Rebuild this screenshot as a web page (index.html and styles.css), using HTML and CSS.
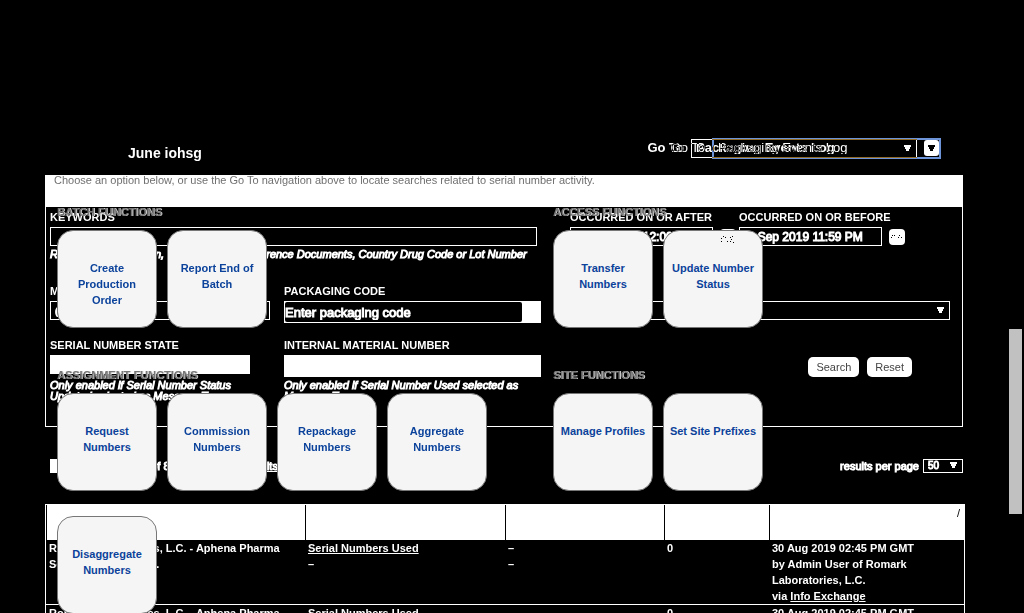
FILE: index.html
```html
<!DOCTYPE html>
<html lang="en">
<head>
<meta charset="utf-8">
<title>Serial number activity</title>
<link rel="stylesheet" href="styles.css">
</head>
<body>
<div class="page">
  <header class="header">
    <strong class="account">June iohsg</strong>
    <div class="goto">
      <label for="goto">Go To</label>
      <span class="select goto-select">
        <select id="goto"><option>Packaging Events Log</option></select>
        <svg class="arrow" viewBox="0 0 7 7"><path d="M0 0h7v2H6v2H5v2H2V4H1V2H0z"/></svg>
      </span>
      <button class="goto-button" type="button" aria-label="Open menu"><svg class="arrow" viewBox="0 0 7 7"><path d="M0 0h7v2H6v2H5v2H2V4H1V2H0z"/></svg></button>
    </div>
  </header>
  <main class="main">
    <form class="panel">
      <div class="band"></div>
      <div class="fields">
        <div class="field wide">
          <label for="kw">KEYWORDS</label>
          <input id="kw" class="keywords" type="text">
          <p class="hint">Results by Transaction, Event Number, Reference Documents, Country Drug Code or Lot Number</p>
        </div>
        <div class="dates">
          <div class="field date">
            <label for="after">OCCURRED ON OR AFTER</label>
            <div class="date-row"><input id="after" type="text" value="30 Aug 2019 12:00 AM"><button class="calendar" type="button" aria-label="Pick start date"></button></div>
          </div>
          <div class="field date">
            <label for="before">OCCURRED ON OR BEFORE</label>
            <div class="date-row"><input id="before" type="text" value="30 Sep 2019 11:59 PM"><button class="calendar" type="button" aria-label="Pick end date"><svg viewBox="0 0 16 16"><path d="M3 6h1v1H3zM2 8h1v1H2zM5 6h1v1H5zM10 6h1v1h-1zM9 8h1v1H9zM12 8h1v1h-1z"/></svg></button></div>
          </div>
        </div>
        <div class="field">
          <label for="mt">MESSAGE TYPE</label>
          <input id="mt" type="text" value="(All)">
        </div>
        <div class="field">
          <label for="pc">PACKAGING CODE</label>
          <div class="lookup"><input id="pc" type="text" value="Enter packaging code"></div>
        </div>
        <div class="field last">
          <label for="ev">EVENT TYPE</label>
          <span class="select">
            <select id="ev"><option></option></select>
            <svg class="arrow" viewBox="0 0 7 7"><path d="M0 0h7v2H6v2H5v2H2V4H1V2H0z"/></svg>
          </span>
        </div>
        <div class="field">
          <label for="st">SERIAL NUMBER STATE</label>
          <input id="st" class="filled state" type="text">
          <p class="hint">Only enabled if Serial Number Status<br>Updated selected as Message Type</p>
        </div>
        <div class="field">
          <label for="mn">INTERNAL MATERIAL NUMBER</label>
          <input id="mn" class="filled tall" type="text">
          <p class="hint">Only enabled if Serial Number Used selected as<br>Message Type</p>
        </div>
        <div class="actions">
          <button class="action" type="button">Search</button>
          <button class="action" type="reset">Reset</button>
        </div>
      </div>
    </form>
    <div class="pager">
      <span class="block"></span>
      <span class="count">1 - 50 of 8</span>
      <a href="#download">Download results</a>
      <label class="per-page" for="pp">results per page</label>
      <span class="select pp-select">
        <select id="pp"><option>50</option></select>
        <svg class="arrow" viewBox="0 0 7 7"><path d="M0 0h7v2H6v2H5v2H2V4H1V2H0z"/></svg>
      </span>
    </div>
    <table class="results">
      <colgroup><col class="c1"><col class="c2"><col class="c3"><col class="c4"><col></colgroup>
      <thead><tr><th></th><th></th><th></th><th></th><th>/</th></tr></thead>
      <tbody>
        <tr>
          <td>Romark Laboratories, L.C. - Aphena Pharma<br>Solutions - Tenn, Inc.</td>
          <td><a href="#used">Serial Numbers Used</a><br>–</td>
          <td>–<br>–</td>
          <td>0</td>
          <td>30 Aug 2019 02:45 PM GMT<br>by Admin User of Romark<br>Laboratories, L.C.<br>via <a href="#ie">Info Exchange</a></td>
        </tr>
        <tr>
          <td>Romark Laboratories, L.C. - Aphena Pharma</td>
          <td><a href="#used">Serial Numbers Used</a></td>
          <td></td>
          <td>0</td>
          <td>30 Aug 2019 02:45 PM GMT</td>
        </tr>
      </tbody>
    </table>
  </main>
  <div class="goto over-goto">
    <label for="goto2">Go To</label>
    <span class="select">
      <select id="goto2"><option>Packaging Events Log</option></select>
    </span>
  </div>
  <div class="overlay">
    <p class="intro">Choose an option below, or use the Go To navigation above to locate searches related to serial number activity.</p>
    <div class="groups">
      <section>
        <h2>BATCH FUNCTIONS</h2>
        <div class="tiles"><a class="tile" href="#a">Create Production Order</a><a class="tile" href="#b">Report End of Batch</a></div>
      </section>
      <section>
        <h2>ACCESS FUNCTIONS</h2>
        <div class="tiles"><a class="tile" href="#c">Transfer Numbers</a><a class="tile" href="#d">Update Number Status<svg class="specks" viewBox="0 0 13 7"><path d="M2 0h1v1H2zM0 2h1v1H0zM0 5h1v1H0zM4 1h1v1H4zM6 5h1v1H6zM9 1h1v1H9zM11 0h1v1h-1zM10 3h1v1h-1zM9 5h1v1H9zM12 6h1v1h-1z"/></svg></a></div>
      </section>
      <section>
        <h2>ASSIGNMENT FUNCTIONS</h2>
        <div class="tiles"><a class="tile" href="#e">Request Numbers</a><a class="tile" href="#f">Commission Numbers</a><a class="tile" href="#g">Repackage Numbers</a><a class="tile" href="#h">Aggregate Numbers</a><a class="tile" href="#i">Disaggregate Numbers</a></div>
      </section>
      <section>
        <h2>SITE FUNCTIONS</h2>
        <div class="tiles"><a class="tile" href="#j">Manage Profiles</a><a class="tile" href="#k">Set Site Prefixes</a></div>
      </section>
    </div>
  </div>
  <div class="thumb"></div>
</div>
</body>
</html>
```
FILE: styles.css
```css
* { box-sizing: border-box; }
body {
  margin: 0;
  background: #000;
  color: #fff;
  font: bold 11px/12px "Liberation Sans", Arial, sans-serif;
}
p, h2 { margin: 0; font-size: 11px; }
a { color: inherit; }
input, select, button { font: inherit; color: inherit; margin: 0; border-radius: 0; }
.page { position: relative; height: 100vh; overflow: hidden; }
.header {
  display: flex;
  justify-content: space-between;
  align-items: flex-start;
  height: 175px;
  padding: 138px 85px 0 128px;
}
.account { font-size: 14px; line-height: 16px; padding-top: 7px; }
.goto { display: flex; align-items: center; gap: 7px; font-size: 13px; height: 20px; }
.goto-button {
  width: 15px;
  height: 16px;
  padding: 0;
  border: 0;
  border-radius: 3px;
  background: #fff;
  display: grid;
  place-items: center;
}
.goto-button .arrow { fill: #000; position: static; }
.goto-select { width: 226px; }
.select { position: relative; display: block; height: 19px; }
.select select {
  display: block;
  appearance: none;
  width: 100%;
  height: 100%;
  padding: 0 4px;
  border: 1px solid #fff;
  background: transparent;
}
.arrow { position: absolute; right: 6px; top: 6px; width: 7px; height: 7px; fill: #fff; }
.over-goto {
  position: absolute;
  top: 138px;
  right: 83px;
  font-weight: normal;
  mix-blend-mode: difference;
}
.over-goto .select { width: 229px; height: 21px; }
.over-goto select { border: 2px solid #6d93d8; }
.main { margin: 0 61px 0 45px; }
.panel { border: 1px solid #fff; border-top: 0; height: 252px; }
.band { height: 32px; background: #fff; }
.fields {
  display: grid;
  grid-template-columns: 220px 257px 1fr;
  grid-template-rows: 74px 54px auto;
  column-gap: 14px;
  padding: 4px 12px 0 4px;
}
.field label { display: block; margin-bottom: 4px; white-space: nowrap; }
.field input {
  display: block;
  width: 100%;
  height: 19px;
  padding: 0 4px;
  border: 1px solid #fff;
  background: transparent;
}
.wide { grid-column: span 2; }
.field .keywords { width: 487px; }
.hint, .field input, .pager { font-weight: normal; -webkit-text-stroke: 1px #fff; }
.hint { font-style: italic; line-height: 11px; margin-top: 3px; white-space: nowrap; }
.dates { display: flex; gap: 2px; padding-left: 15px; }
.date { width: 167px; }
.date-row { display: flex; align-items: center; gap: 7px; }
.field .date-row input { width: 143px; padding: 0 1px; font-size: 12px; }
.calendar { width: 16px; height: 16px; padding: 0; border: 0; border-radius: 4px; background: #fff; }
.calendar svg { display: block; width: 16px; height: 16px; fill: #000; }
.last { padding-left: 15px; }
.lookup { background: #fff; padding: 1px 19px 1px 1px; }
.field .lookup input { height: 20px; padding: 0; border: 0; border-radius: 2px; background: #000; font-size: 13px; }
.field .filled { background: #fff; }
.field .state { width: 200px; margin-bottom: 6px; }
.field .tall { height: 22px; }
.actions { display: flex; justify-content: flex-end; gap: 8px; padding: 18px 38px 0 0; }
.action {
  height: 20px;
  padding: 0 8px;
  border: 0;
  border-radius: 5px;
  background: #fff;
  color: #444;
  font-weight: normal;
}
.pager { display: flex; align-items: center; gap: 4px; margin: 31px 0 30px 5px; height: 16px; }
.block { width: 66px; height: 14px; background: #fff; }
.pager a { margin-left: 20px; }
.per-page { margin-left: auto; }
.pp-select { width: 40px; height: 14px; font-size: 10px; }
.pp-select .arrow { top: 3px; }
.results { width: calc(100% + 2px); table-layout: fixed; border-collapse: separate; border-spacing: 0; border: 1px solid #fff; }
.c1 { width: 259px; }
.c2 { width: 200px; }
.c3 { width: 159px; }
.c4 { width: 105px; }
.results th {
  height: 35px;
  padding: 2px 4px;
  background: #fff;
  color: #000;
  text-align: right;
  vertical-align: top;
  font-weight: normal;
  border-left: 1px solid #000;
}
.results td { padding: 0 3px; line-height: 16px; vertical-align: top; white-space: nowrap; border-bottom: 1px solid #fff; }
.overlay { position: absolute; top: 174px; left: 45px; right: 61px; }
.intro { padding-left: 9px; font-weight: normal; color: #707070; white-space: nowrap; }
.groups { display: grid; grid-template-columns: 496px 1fr; row-gap: 41px; padding: 20px 0 0 12px; }
.groups h2 { color: #777; text-shadow: 1px 0 #ccc; }
.tiles { display: flex; flex-wrap: wrap; gap: 25px 10px; margin-top: 12px; }
.tile {
  position: relative;
  width: 100px;
  height: 98px;
  padding: 29px 5px 0;
  border: 1px solid #777;
  border-radius: 16px;
  background: #f5f5f5;
  color: #0b429b;
  line-height: 16px;
  text-align: center;
  text-decoration: none;
}
.specks { position: absolute; left: 57px; top: 5px; width: 13px; height: 7px; fill: #000; }
.thumb { position: absolute; right: 2px; top: 329px; width: 13px; height: 185px; background: #c1c1c1; }
```
